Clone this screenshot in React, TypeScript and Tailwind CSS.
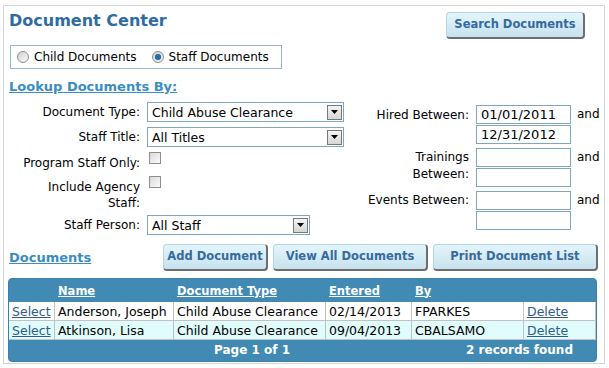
import React from "react";

const FONT = "font-['DejaVu_Sans',Verdana,sans-serif]";

function Btn({ w, children }: { w: string; children: React.ReactNode }) {
  return (
    <div
      className={`${w} h-[27px] flex items-center justify-center rounded-[4px] border border-t-[#b3d6e8] border-l-[#b3d6e8] border-r-2 border-b-2 border-r-[#6e6e6e] border-b-[#6e6e6e] bg-gradient-to-b from-[#e4f5fb] to-[#c6e2ee] text-[11.5px] font-bold text-[#37699f]`}
    >
      {children}
    </div>
  );
}

function Radio({ checked }: { checked?: boolean }) {
  return (
    <div className="w-[12px] h-[12px] rounded-full border border-[#8d8d8d] bg-gradient-to-br from-[#d4d4d4] to-[#f7f7f7] flex items-center justify-center">
      {checked && <div className="w-[6px] h-[6px] rounded-full bg-[#2a6aa6] shadow-[0_0_1px_#6fa8d6]" />}
    </div>
  );
}

function Check() {
  return <div className="w-[12px] h-[12px] border border-[#8e8e8e] bg-gradient-to-br from-[#d9d9d9] to-[#fbfbfb]" />;
}

function Select({ w, text }: { w: string; text: string }) {
  return (
    <div className={`${w} h-[20px] border border-[#7fa7c0] bg-white flex items-center pl-[4px] text-[12.5px] leading-[15px]`}>
      <span className="flex-1 truncate">{text}</span>
      <div className="w-[15px] h-[15px] mr-[1px] border border-[#777] bg-gradient-to-b from-[#f4f4f4] to-[#d6d6d6] flex items-center justify-center">
        <svg width="7" height="4" viewBox="0 0 7 4"><path d="M0 0h7L3.5 4z" fill="#000" /></svg>
      </div>
    </div>
  );
}

function Input({ value }: { value?: string }) {
  return (
    <div className="w-[95px] h-[19px] border border-[#7fa7c0] bg-white pl-[4px] text-[13px] leading-[17px]">{value}</div>
  );
}

const cols = "grid grid-cols-[46px_119px_152px_86px_112px_72px]";

function Row({ bg, name, date, by }: { bg: string; name: string; date: string; by: string }) {
  const cell = "h-[19px] border-r border-b border-[#c2c2c2] px-[3px] pt-[1px] leading-[17px] whitespace-nowrap overflow-hidden";
  return (
    <div className={`${cols} ${bg} text-[12.5px]`}>
      <div className={`${cell} text-[#2c5c8a] underline`}>Select</div>
      <div className={cell}>{name}</div>
      <div className={cell}>Child Abuse Clearance</div>
      <div className={cell}>{date}</div>
      <div className={cell}>{by}</div>
      <div className={`${cell} text-[#2c5c8a] underline`}>Delete</div>
    </div>
  );
}

export default function App() {
  return (
    <div className={`w-[609px] h-[368px] bg-white pt-[5px] pl-[3px] text-black ${FONT}`}>
      <div className="w-[602px] h-[359px] border border-[#d6d6d6] pl-[5px]">
        {/* Title row */}
        <div className="flex justify-between items-start">
          <div className="mt-[5px] text-[16px] font-bold leading-[19px] text-[#2e6ca4]">Document Center</div>
          <div className="mt-[6px] mr-[19px]">
            <Btn w="w-[139px]">Search Documents</Btn>
          </div>
        </div>

        {/* Radio box */}
        <div className="mt-[6px] ml-[1px] w-[272px] h-[24px] border border-[#94b8cc] flex items-center pl-[6px] text-[12px]">
          <Radio />
          <span className="ml-[5px]">Child Documents</span>
          <div className="ml-[15px]"><Radio checked /></div>
          <span className="ml-[5px]">Staff Documents</span>
        </div>

        <div className="mt-[10px] text-[13px] leading-[16px] font-bold text-[#3b8cc1] underline">Lookup Documents By:</div>

        {/* Form */}
        <div className="mt-[7px] flex text-[12px] leading-[16px]">
          <div className="w-[341px] flex flex-col">
            <div className="flex items-center h-[20px]">
              <div className="w-[131px] text-right">Document Type:</div>
              <div className="ml-[7px]"><Select w="w-[197px]" text="Child Abuse Clearance" /></div>
            </div>
            <div className="flex items-center h-[20px] mt-[5px]">
              <div className="w-[131px] text-right">Staff Title:</div>
              <div className="ml-[7px]"><Select w="w-[197px]" text="All Titles" /></div>
            </div>
            <div className="flex items-start mt-[5px]">
              <div className="w-[131px] text-right mt-[3px]">Program Staff Only:</div>
              <div className="ml-[9px]"><Check /></div>
            </div>
            <div className="flex items-start mt-[5px]">
              <div className="w-[131px] text-right mt-[3px]">Include Agency<br />Staff:</div>
              <div className="ml-[9px]"><Check /></div>
            </div>
            <div className="flex items-center h-[20px] mt-[4px]">
              <div className="w-[131px] text-right">Staff Person:</div>
              <div className="ml-[7px]"><Select w="w-[163px]" text="All Staff" /></div>
            </div>
          </div>

          <div className="flex flex-col mt-[3px] gap-[4px]">
            <div className="flex items-start">
              <div className="w-[119px] text-right mt-[2px]">Hired Between:</div>
              <div className="ml-[7px] flex flex-col gap-[1px]">
                <Input value="01/01/2011" />
                <Input value="12/31/2012" />
              </div>
              <div className="ml-[6px] mt-[1px]">and</div>
            </div>
            <div className="flex items-start">
              <div className="w-[119px] text-right mt-[1px] leading-[17px]">Trainings<br />Between:</div>
              <div className="ml-[7px] flex flex-col gap-[1px]">
                <Input />
                <Input />
              </div>
              <div className="ml-[6px] mt-[1px]">and</div>
            </div>
            <div className="flex items-start">
              <div className="w-[119px] text-right mt-[1px]">Events Between:</div>
              <div className="ml-[7px] flex flex-col gap-[1px]">
                <Input />
                <Input />
              </div>
              <div className="ml-[6px] mt-[1px]">and</div>
            </div>
          </div>
        </div>

        {/* Documents row */}
        <div className="mt-[9px] flex items-center">
          <div className="w-[154px] text-[13px] leading-[16px] font-bold text-[#3b8cc1] underline">Documents</div>
          <div className="flex gap-[5px]">
            <Btn w="w-[105px]">Add Document</Btn>
            <Btn w="w-[155px]">View All Documents</Btn>
            <Btn w="w-[165px]">Print Document List</Btn>
          </div>
        </div>

        {/* Table */}
        <div className="mt-[7px] -ml-[1px] w-[589px] rounded-[4px] border border-[#3b80aa] bg-[#418ab4] overflow-hidden">
          <div className={`${cols} h-[23px] items-center text-[11.5px] font-bold text-white leading-[14px]`}>
            <div />
            <div className="px-[3px] underline">Name</div>
            <div className="px-[3px] underline">Document Type</div>
            <div className="px-[3px] underline">Entered</div>
            <div className="px-[3px] underline">By</div>
            <div />
          </div>
          <Row bg="bg-white" name="Anderson, Joseph" date="02/14/2013" by="FPARKES" />
          <Row bg="bg-[#e0fcfc]" name="Atkinson, Lisa" date="09/04/2013" by="CBALSAMO" />
          <div className="h-[21px] flex items-center text-[12px] font-bold text-white leading-[15px]">
            <div className="ml-[205px]">Page 1 of 1</div>
            <div className="ml-auto mr-[23px]">2 records found</div>
          </div>
        </div>
      </div>
    </div>
  );
}
